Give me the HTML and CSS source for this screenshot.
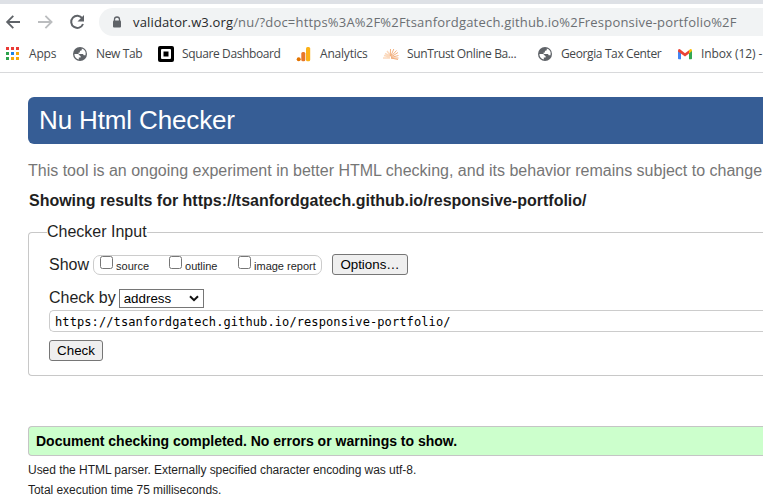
FILE: index.html
```html
<!DOCTYPE html>
<html lang="en">
<head>
<meta charset="utf-8">
<title>Nu Html Checker</title>
<link rel="stylesheet" href="styles.css">
</head>
<body>
<svg class="defs" width="0" height="0" aria-hidden="true">
  <symbol id="globe" viewBox="0 0 16 16">
    <circle cx="8" cy="8" r="7" fill="#5f6368"/>
    <path d="M2.4 8h3.2c1.8 0 1.7 1.9 3 2v1.4H6.8v2.1A5.7 5.7 0 0 1 2.4 8zM9.8 2.6v.8c0 1-.7 1.3-1.9 1.3v1.8H6.6v1.4h3.5c1.2 0 1.5.6 1.5 1.3h1.9A5.7 5.7 0 0 0 9.8 2.6z" fill="#fff"/>
  </symbol>
</svg>
<header class="browser">
  <div class="toolbar">
    <svg class="nav" width="90" height="28" viewBox="0 0 90 28" fill="none" stroke-width="1.8">
      <path d="M20 14H7.5M13.3 7.8 7.1 14l6.2 6.2" stroke="#5f6368"/>
      <path d="M38 14h13.2M45.400 7.800 51.600 14l-6.200 6.200" stroke="#bbbdbf"/>
      <path d="M82.300 10.300A6.100 6.100 0 1 0 83 16" stroke="#5f6368" stroke-width="2"/>
      <path d="M84 7v6.500h-6.500z" fill="#5f6368"/>
    </svg>
    <div class="omnibox">
      <svg class="lock" width="10" height="13" viewBox="0 0 10 13"><path d="M2.500 5V3.500a2.500 2.500 0 0 1 5 0V5" fill="none" stroke="#5f6368" stroke-width="1.300"/><rect x="1" y="4.500" width="8" height="7" rx="1" fill="#5f6368"/></svg>
      <span class="url"><span class="host">validator.w3.org</span>/nu/?doc=https%3A%2F%2Ftsanfordgatech.github.io%2Fresponsive-portfolio%2F</span>
    </div>
  </div>
  <nav class="bookmarks">
    <a class="bm apps"><svg width="14" height="14" viewBox="0 0 14 14"><path d="M0 0h3v3H0zM5 0h3v3H5zM10 0h3v3h-3z" fill="#ea3a35"/><path d="M0 5h3v3H0zM0 10h3v3H0z" fill="#2ba24c"/><path d="M5 5h3v3H5z" fill="#1a82e8"/><path d="M10 5h3v3h-3zM5 10h3v3H5zM10 10h3v3h-3z" fill="#f5a70a"/></svg><span>Apps</span></a>
    <a class="bm newtab"><svg width="16" height="16"><use href="#globe"/></svg><span>New Tab</span></a>
    <a class="bm square"><svg width="16" height="16" viewBox="0 0 16 16"><rect width="16" height="16" rx="2" fill="#000"/><rect x="3" y="3" width="10" height="10" rx="1" fill="#fff"/><rect x="5.500" y="5.500" width="5" height="5" fill="#000"/></svg><span>Square Dashboard</span></a>
    <a class="bm analytics"><svg width="16" height="16" viewBox="0 0 16 16"><circle cx="2.700" cy="13.200" r="2" fill="#e37400"/><rect x="5.300" y="6" width="4" height="9.200" rx="1.500" fill="#e8772a"/><rect x="10" y="1" width="4.200" height="14.200" rx="1.500" fill="#fbb117"/></svg><span>Analytics</span></a>
    <a class="bm suntrust"><svg width="16" height="16" viewBox="0 0 16 16" fill="none"><path d="m7 12-7 0M7 11 1 9.500M7 10 2 7.500M8 10 4 5" stroke="#fbd9bd" stroke-width="1.500"/><path d="M8 12h7.500M8 11.500l7.500-2M8 11l7-4.500M8 10.500l5.500-6M7.800 10l3-7M7.300 10 7.500 3M8 12l7 1.500" stroke="#f0a873" stroke-width=".9"/></svg><span>SunTrust Online Ba...</span></a>
    <a class="bm georgia"><svg width="16" height="16"><use href="#globe"/></svg><span>Georgia Tax Center</span></a>
    <a class="bm inbox"><svg width="16" height="16" viewBox="0 0 16 16"><path d="M1 4.500v8q0 .8.800.8H4V7z" fill="#4285f4"/><path d="M15 4.500v8q0 .8-.8.800H12V7z" fill="#34a853"/><path d="M12 4.200 13 3.300q2-.8 2 1.700L12 7.500z" fill="#fbbc04"/><path d="M1 5q0-2.500 2-1.700L8 7.200l4-3v3.300l-4 3-7-5z" fill="#ea4335"/></svg><span>Inbox (12) -</span></a>
  </nav>
</header>
<main>
  <h1>Nu Html Checker</h1>
  <p class="notice">This tool is an ongoing experiment in better HTML checking, and its behavior remains subject to change</p>
  <h2>Showing results for https://tsanfordgatech.github.io/responsive-portfolio/</h2>
  <form>
    <fieldset>
      <legend>Checker Input</legend>
      <div class="show">
        <span class="label">Show</span>
        <div class="checks">
          <label><i class="box"></i><span>source</span></label>
          <label><i class="box"></i><span>outline</span></label>
          <label><i class="box"></i><span>image report</span></label>
        </div>
        <button type="button" class="options">Options…</button>
      </div>
      <div class="by">
        <span class="label">Check by</span>
        <div class="select"><span>address</span><svg width="10" height="7" viewBox="0 0 10 7"><path d="m1 1.200 4 4 4-4" fill="none" stroke="#111" stroke-width="2"/></svg></div>
      </div>
      <div class="doc">https://tsanfordgatech.github.io/responsive-portfolio/</div>
      <button type="button" class="check">Check</button>
    </fieldset>
  </form>
  <p class="success">Document checking completed. No errors or warnings to show.</p>
  <p class="detail parser">Used the HTML parser. Externally specified character encoding was utf-8.</p>
  <p class="detail time">Total execution time 75 milliseconds.</p>
</main>
</body>
</html>
```
FILE: styles.css
```css
* { box-sizing: border-box; }
html, body { margin: 0; overflow: hidden; height: 504px; }
body { background: #fff; color: #1f1f1f; font-family: "Liberation Sans", Arial, sans-serif; white-space: nowrap; }
.defs { display: block; }
svg { flex: none; }

.browser { height: 73px; border-top: 4px solid #dee1e6; border-bottom: 1px solid #d8d9db; font-family: "Open Sans", "Noto Sans", sans-serif; }
.toolbar { display: flex; padding-top: 4px; }
.nav { margin-right: 9px; }
.omnibox { flex: 1; display: flex; align-items: center; height: 28px; padding-left: 13px; background: #f1f3f4; border-radius: 14px 0 0 14px; }
.lock { margin-right: 11px; }
.url { color: #6b6f73; font-size: 13px; letter-spacing: 0.2px; }
.host { color: #26282b; letter-spacing: 0.15px; }
.bookmarks { display: flex; height: 36px; align-items: center; padding-left: 6px; color: #44474a; font-size: 12px; }
.bm { display: flex; align-items: center; gap: 8px; flex: none; letter-spacing: -0.38px; }
.bm span { margin-top: -1px; }
.apps { width: 66px; gap: 9px; letter-spacing: -0.2px; }
.newtab { width: 86px; }
.square { width: 138px; }
.analytics { width: 87px; letter-spacing: -0.2px; }
.suntrust { width: 154px; }
.georgia { width: 140px; }
.inbox { letter-spacing: -0.1px; }

main { width: 735px; margin-left: 28px; padding-top: 24px; }
h1 { margin: 0; height: 47px; padding-left: 11px; background: #365d95; border-radius: 6px 0 0 6px; color: #fff; font-size: 26px; font-weight: 400; line-height: 46px; letter-spacing: -0.14px; }
.notice { margin: 17px 0 0; height: 20px; line-height: 20px; font-size: 16px; color: #767676; }
h2 { margin: 10px 0 0 1px; height: 20px; line-height: 20px; font-size: 16px; letter-spacing: -0.01px; }
form { margin-top: 11px; }
fieldset { margin: 0; height: 154px; padding: 12px 0 0 20px; border: 1px solid #c8c8c8; border-right: 0; border-radius: 4px 0 0 4px; font-size: 16px; }
legend { margin-left: -2px; padding: 0; height: 20px; line-height: 20px; }
.show, .by { display: flex; align-items: center; }
.show { height: 21px; }
.label { line-height: 20px; }
.checks { display: flex; width: 229px; height: 20px; margin: 0 10px 0 4px; padding-left: 6px; border: 1px solid #ccc; border-radius: 7px; font-size: 11px; }
.checks label { display: flex; width: 69px; }
.checks span { line-height: 20px; margin-left: 3px; }
.box { flex: none; width: 13px; height: 13px; border: 1px solid #767676; border-radius: 2.500px; background: #fff; }
button { height: 21px; padding: 0; border: 1px solid #767676; border-radius: 3px; background: #efefef; color: #000; font: 13.333px/19px "Liberation Sans", Arial, sans-serif; }
.options { width: 76px; }
.by { margin-top: 13px; height: 20px; }
.select { display: flex; align-items: center; justify-content: space-between; width: 85px; height: 19px; margin-left: 3px; padding: 0 4px; border: 1px solid #767676; font-size: 13.333px; color: #000; }
.doc { margin-top: 2px; height: 22px; padding-left: 5px; border: 1px solid #ccc; border-right: 0; border-radius: 5px 0 0 5px; font: 12px/22px "DejaVu Sans Mono", monospace; letter-spacing: 0.1px; color: #000; }
.check { display: block; width: 54px; margin-top: 8px; }
.success { margin: 50px 0 0; height: 30px; padding-left: 7px; border: 1px solid #c5c5c5; border-right: 0; border-radius: 4px 0 0 4px; background: #cfc; color: #000; font-size: 14px; font-weight: 700; line-height: 28px; }
.detail { margin: 0; font-size: 12px; line-height: 20px; letter-spacing: -0.04px; }
.parser { margin-top: 4px; }
```
